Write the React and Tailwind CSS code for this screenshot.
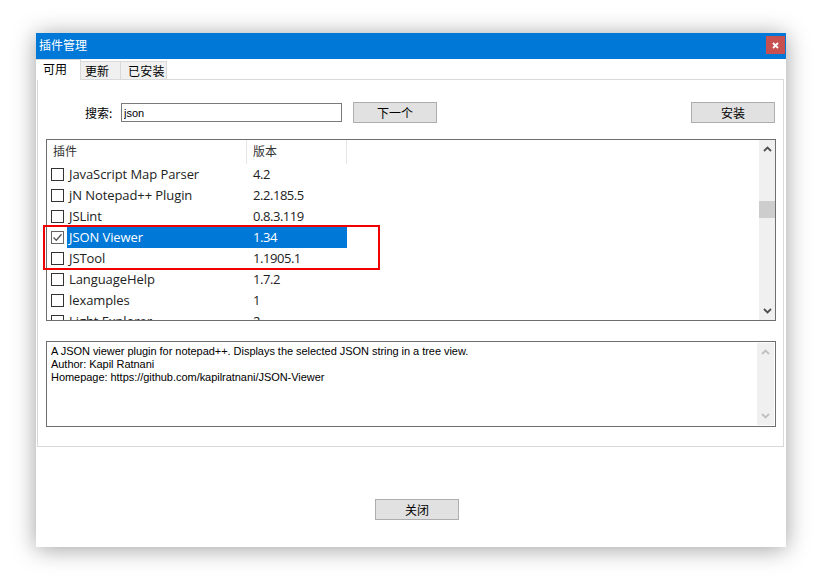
const cjk = '"Noto Sans CJK SC", "Noto Sans", sans-serif';
const rows = [
  ['JavaScript Map Parser', '4.2'],
  ['jN Notepad++ Plugin', '2.2.185.5'],
  ['JSLint', '0.8.3.119'],
  ['JSON Viewer', '1.34', true],
  ['JSTool', '1.1905.1'],
  ['LanguageHelp', '1.7.2'],
  ['lexamples', '1'],
  ['Light Explorer', '2'],
];

function Chevron({ up, color, className }) {
  return (
    <svg viewBox="0 0 9 6" className={className} fill="none" stroke={color} strokeWidth="1.8">
      <path d={up ? 'M1 5l3.5-3.5L8 5' : 'M1 1l3.5 3.5L8 1'} />
    </svg>
  );
}

function Btn({ children }) {
  return (
    <button className="block w-[84px] h-[21px] border border-[#adadad] bg-[#e1e1e1] text-[12px] leading-[19px] text-black">
      {children}
    </button>
  );
}

function Row({ name, version, selected }) {
  return (
    <div className="flex items-center h-[21px] text-[13px] text-[#222]">
      <div className="w-[20px] flex justify-end pr-[3px] shrink-0">
        <div className={`w-[13px] h-[13px] border bg-white flex items-center justify-center ${selected ? 'border-[#666]' : 'border-[#333]'}`}>
          {selected && (
            <svg viewBox="0 0 11 11" className="w-[11px] h-[11px]" fill="none" stroke="#555" strokeWidth="1.3">
              <path d="M1.5 5.5l2.8 2.8 5.2-6" />
            </svg>
          )}
        </div>
      </div>
      <div className={`flex h-[21px] items-center w-[280px] ${selected ? 'bg-[#0078d7] text-white' : ''}`}>
        <div className="w-[186px] pl-[2px] whitespace-nowrap tracking-[-0.08px]">{name}</div>
        <div className="tracking-[-0.45px]">{version}</div>
      </div>
    </div>
  );
}

export default function App() {
  return (
    <div className="w-[820px] h-[587px] bg-white pt-[33px] pl-[36px] overflow-hidden" style={{ fontFamily: cjk }}>
      <div className="relative w-[750px] h-[514px] bg-white shadow-[0_2px_22px_rgba(0,0,0,0.38)] flex flex-col">
        <div className="h-[26px] bg-[#0078d7] flex items-start justify-between pl-[3px] pr-px shrink-0">
          <span className="text-[12px] leading-[24px] text-white">插件管理</span>
          <div className="mt-[3px] w-[19px] h-[18px] bg-[#c75050] flex items-center justify-center">
            <svg viewBox="0 0 7 7" className="w-[7px] h-[7px]" stroke="white" strokeWidth="1.8">
              <path d="M1 1l5 5M6 1l-5 5" />
            </svg>
          </div>
        </div>

        <div className="flex items-end h-[21px] shrink-0 relative z-10 -mb-px">
          <div className="w-[45px] h-[21px] bg-white border-r border-t border-[#d9d9d9] text-[12px] leading-[18px] pl-[7px] text-black">可用</div>
          <div className="w-[40px] h-[19px] bg-[#f0f0f0] border-r border-t border-b border-[#d9d9d9] text-[12px] leading-[17px] pl-[4px] text-black">更新</div>
          <div className="w-[46px] h-[19px] bg-[#f0f0f0] border-r border-t border-b border-[#d9d9d9] text-[12px] leading-[17px] pl-[7px] tracking-[0.3px] text-black">已安装</div>
        </div>

        <div className="ml-px w-[747px] h-[368px] border border-[#d9d9d9] shrink-0 pt-[22px] pl-[8px]">
          <div className="flex items-center h-[21px] w-[730px]">
            <span className="ml-[39px] w-[36px] text-[12px] text-black">搜索:</span>
            <input readOnly value="json" className="w-[221px] h-[19px] border border-[#7a7a7a] px-[2px] text-[11px] text-black outline-none" style={{ fontFamily: '"Liberation Sans", sans-serif' }} />
            <div className="ml-[11px]"><Btn>下一个</Btn></div>
            <div className="ml-auto mr-px"><Btn>安装</Btn></div>
          </div>

          <div className="mt-[16px] w-[730px] h-[182px] border border-[#6e6e6e] flex overflow-hidden">
            <div className="flex-1 overflow-hidden">
              <div className="flex h-[24px] text-[12px] text-[#333]">
                <div className="w-[200px] pl-[6px] border-r border-[#e5e5e5] leading-[22px]">插件</div>
                <div className="w-[100px] pl-[6px] border-r border-[#e5e5e5] leading-[22px]">版本</div>
              </div>
              <div style={{ fontFamily: '"Open Sans", "Noto Sans", sans-serif' }}>
                {rows.map((r) => (
                  <Row key={r[0]} name={r[0]} version={r[1]} selected={r[2]} />
                ))}
              </div>
            </div>
            <div className="w-[16px] bg-[#f0f0f0] flex flex-col items-center">
              <div className="h-[18px] flex items-center justify-center"><Chevron up color="#505050" className="w-[9px] h-[6px]" /></div>
              <div className="flex-1 w-full pt-[43px]">
                <div className="w-full h-[17px] bg-[#cdcdcd]" />
              </div>
              <div className="h-[18px] flex items-center justify-center"><Chevron color="#505050" className="w-[9px] h-[6px]" /></div>
            </div>
          </div>

          <div className="mt-[20px] w-[730px] h-[86px] border border-[#6e6e6e] flex p-px">
            <div className="flex-1 pl-[3px] pt-[2px] text-[11px] leading-[13px] tracking-[-0.04px] text-black" style={{ fontFamily: '"Liberation Sans", sans-serif' }}>
              <div>A JSON viewer plugin for notepad++. Displays the selected JSON string in a tree view.</div>
              <div>Author: Kapil Ratnani</div>
              <div>Homepage: https://github.com/kapilratnani/JSON-Viewer</div>
            </div>
            <div className="w-[17px] bg-[#f0f0f0] flex flex-col items-center justify-between py-[6px]">
              <Chevron up color="#c0c0c0" className="w-[9px] h-[6px]" />
              <Chevron color="#c0c0c0" className="w-[9px] h-[6px]" />
            </div>
          </div>
        </div>

        <div className="flex pt-[52px] pl-[339px]">
          <Btn>关闭</Btn>
        </div>

        <div className="absolute left-[7px] top-[192px] w-[337px] h-[45px] border-2 border-[#f00000] pointer-events-none" />
      </div>
    </div>
  );
}
